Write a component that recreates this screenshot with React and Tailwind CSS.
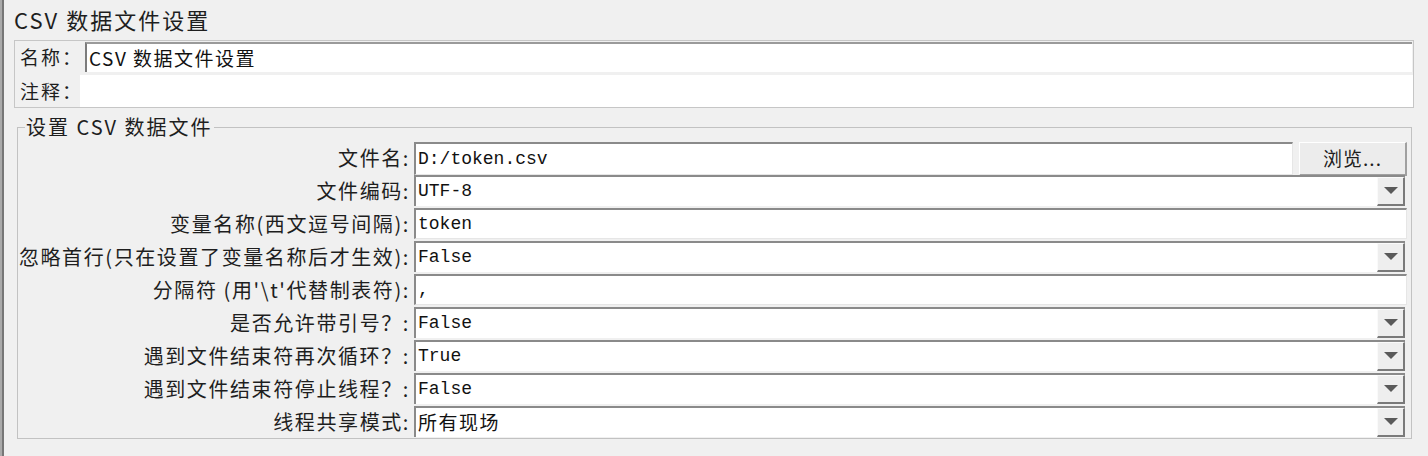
const cjk = "font-['Noto_Sans_CJK_SC',sans-serif]";
const mono = "font-['Liberation_Mono','Noto_Sans_CJK_SC',monospace]";

const rows = [
  { label: "文件名:", type: "file", value: "D:/token.csv" },
  { label: "文件编码:", type: "combo", value: "UTF-8" },
  { label: "变量名称(西文逗号间隔):", type: "text", value: "token" },
  { label: "忽略首行(只在设置了变量名称后才生效):", type: "combo", value: "False" },
  { label: "分隔符 (用'\\t'代替制表符):", type: "text", value: "," },
  { label: "是否允许带引号？:", type: "combo", value: "False" },
  { label: "遇到文件结束符再次循环？:", type: "combo", value: "True" },
  { label: "遇到文件结束符停止线程？:", type: "combo", value: "False" },
  { label: "线程共享模式:", type: "combo", value: "所有现场", cjkValue: true },
];

function Value({ text, cjkValue }) {
  return (
    <span className={cjkValue ? `${cjk} text-[19px] tracking-[1.5px]` : `${mono} text-[18px]`}>{text}</span>
  );
}

function TextField({ value, cjkValue, className = "" }) {
  return (
    <div className={`flex h-full items-center border-t-2 border-l-2 border-t-[#8a8a8a] border-l-[#8a8a8a] border-r border-b border-r-[#e6e6e6] border-b-[#e6e6e6] bg-white pl-[2px] text-[#111] ${className}`}>
      <Value text={value} cjkValue={cjkValue} />
    </div>
  );
}

function Combo({ value, cjkValue }) {
  return (
    <div className="flex h-full w-[991px] border-t-2 border-l-2 border-t-[#8a8a8a] border-l-[#8a8a8a] bg-white text-[#111]">
      <div className="flex flex-1 items-center pl-[2px]">
        <Value text={value} cjkValue={cjkValue} />
      </div>
      <div className="flex w-[28px] items-center justify-center border-l border-t border-l-[#fafafa] border-t-[#fafafa] border-r-2 border-b-2 border-r-[#7a7a7a] border-b-[#7a7a7a] bg-[#eeeeee]">
        <svg width="14" height="8" viewBox="0 0 14 8">
          <polygon points="0,0 14,0 7,7" fill="#5a5a5a" />
        </svg>
      </div>
    </div>
  );
}

export default function App() {
  return (
    <div className={`flex h-[456px] w-[1428px] bg-[#f0f0f0] ${cjk} text-[#1e1e1e]`}>
      <div className="w-[4px] border-r-[2px] border-[#777] bg-[#aaa]" />
      <div className="flex flex-1 flex-col pl-[10px]">
        <h1 className="h-[40px] pt-[3px] text-[22px] leading-[32px] tracking-[2px] font-normal">CSV 数据文件设置</h1>

        <div className="w-[1400px] border border-[#c6c6c6]">
          <div className="flex h-[32px] items-center">
            <span className="w-[70px] shrink-0 whitespace-nowrap pl-[5px] text-[19px] tracking-[2px]">名称：</span>
            <div className="h-[30px] flex-1 pr-[1px]">
              <div className={`flex h-full items-center border-t-2 border-l-2 border-t-[#9a9a9a] border-l-[#7c7c7c] bg-white pl-[2px] ${cjk} text-[19px] tracking-[1.5px] text-[#111]`}>
                CSV 数据文件设置
              </div>
            </div>
          </div>
          <div className="mt-[2px] flex h-[32px] items-center">
            <span className="w-[65px] shrink-0 whitespace-nowrap pl-[5px] text-[19px] tracking-[2px]">注释：</span>
            <div className="h-full flex-1 bg-white" />
          </div>
        </div>

        <fieldset className="mt-[8px] ml-[3px] w-[1395px] border border-[#c2c2c2] pb-[1px]">
          <legend className="ml-[7px] px-[1px] text-[20px] leading-[22px] tracking-[2px]">设置 CSV 数据文件</legend>
          <div className="mt-[4px] flex flex-col gap-[2px]">
            {rows.map((row) => (
              <div key={row.label} className="flex h-[31px] items-stretch">
                <div className="flex w-[396px] items-center justify-end pr-[4px] text-[20px] tracking-[1.6px] whitespace-nowrap">
                  {row.label}
                </div>
                {row.type === "file" && (
                  <div className="flex h-[34px] items-start">
                    <TextField value={row.value} className="w-[879px] !h-[33px]" />
                    <button className="ml-[6px] h-[34px] w-[108px] border-t border-l border-t-white border-l-white border-r-2 border-b-2 border-r-[#a0a0a0] border-b-[#a0a0a0] bg-[#ececec] text-[19px] tracking-[1px]">
                      浏览...
                    </button>
                  </div>
                )}
                {row.type === "text" && <TextField value={row.value} className="w-[993px]" />}
                {row.type === "combo" && <Combo value={row.value} cjkValue={row.cjkValue} />}
              </div>
            ))}
          </div>
        </fieldset>
      </div>
    </div>
  );
}
